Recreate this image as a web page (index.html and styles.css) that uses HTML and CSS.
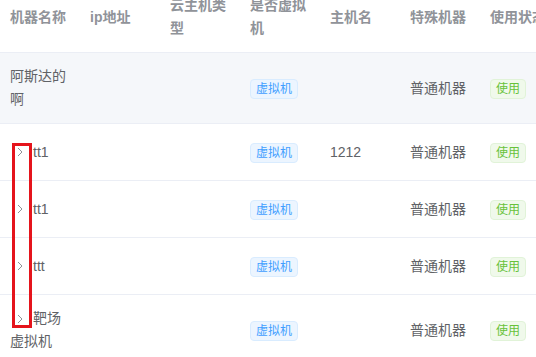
FILE: index.html
```html
<!DOCTYPE html>
<html lang="zh-CN">
<head>
<meta charset="utf-8">
<link rel="stylesheet" href="styles.css">
</head>
<body>
<div class="wrap">
  <table class="tbl">
    <colgroup>
      <col class="c"><col class="c"><col class="c"><col class="c"><col class="c"><col class="c"><col class="c">
    </colgroup>
    <thead>
      <tr>
        <th><div class="cell">机器名称</div></th>
        <th><div class="cell">ip地址</div></th>
        <th><div class="cell">云主机类型</div></th>
        <th><div class="cell">是否虚拟机</div></th>
        <th><div class="cell">主机名</div></th>
        <th><div class="cell">特殊机器</div></th>
        <th><div class="cell">使用状态</div></th>
      </tr>
    </thead>
    <tbody>
      <tr class="hover">
        <td><div class="cell">阿斯达的啊</div></td>
        <td><div class="cell"></div></td>
        <td><div class="cell"></div></td>
        <td><div class="cell"><span class="tag tag-blue">虚拟机</span></div></td>
        <td><div class="cell"></div></td>
        <td><div class="cell">普通机器</div></td>
        <td><div class="cell"><span class="tag tag-green">使用</span></div></td>
      </tr>
      <tr>
        <td><div class="cell"><span class="expand"><svg width="8" height="10" viewBox="0 0 8 10"><path d="M2 1 L6 5 L2 9" fill="none" stroke="#909399" stroke-width="1"/></svg></span>tt1</div></td>
        <td><div class="cell"></div></td>
        <td><div class="cell"></div></td>
        <td><div class="cell"><span class="tag tag-blue">虚拟机</span></div></td>
        <td><div class="cell">1212</div></td>
        <td><div class="cell">普通机器</div></td>
        <td><div class="cell"><span class="tag tag-green">使用</span></div></td>
      </tr>
      <tr>
        <td><div class="cell"><span class="expand"><svg width="8" height="10" viewBox="0 0 8 10"><path d="M2 1 L6 5 L2 9" fill="none" stroke="#909399" stroke-width="1"/></svg></span>tt1</div></td>
        <td><div class="cell"></div></td>
        <td><div class="cell"></div></td>
        <td><div class="cell"><span class="tag tag-blue">虚拟机</span></div></td>
        <td><div class="cell"></div></td>
        <td><div class="cell">普通机器</div></td>
        <td><div class="cell"><span class="tag tag-green">使用</span></div></td>
      </tr>
      <tr>
        <td><div class="cell"><span class="expand"><svg width="8" height="10" viewBox="0 0 8 10"><path d="M2 1 L6 5 L2 9" fill="none" stroke="#909399" stroke-width="1"/></svg></span>ttt</div></td>
        <td><div class="cell"></div></td>
        <td><div class="cell"></div></td>
        <td><div class="cell"><span class="tag tag-blue">虚拟机</span></div></td>
        <td><div class="cell"></div></td>
        <td><div class="cell">普通机器</div></td>
        <td><div class="cell"><span class="tag tag-green">使用</span></div></td>
      </tr>
      <tr>
        <td><div class="cell"><span class="expand"><svg width="8" height="10" viewBox="0 0 8 10"><path d="M2 1 L6 5 L2 9" fill="none" stroke="#909399" stroke-width="1"/></svg></span>靶场虚拟机</div></td>
        <td><div class="cell"></div></td>
        <td><div class="cell"></div></td>
        <td><div class="cell"><span class="tag tag-blue">虚拟机</span></div></td>
        <td><div class="cell"></div></td>
        <td><div class="cell">普通机器</div></td>
        <td><div class="cell"><span class="tag tag-green">使用</span></div></td>
      </tr>
    </tbody>
  </table>
  <div class="annot"></div>
</div>
</body>
</html>
```
FILE: styles.css
```css
html, body {
  margin: 0;
  padding: 0;
  background: #fff;
  overflow: hidden;
  width: 536px;
  height: 357px;
}
.wrap {
  position: relative;
  width: 536px;
  height: 357px;
  overflow: hidden;
}
.tbl {
  margin-top: -18px;
  table-layout: fixed;
  width: 560px;
  border-collapse: collapse;
  border-spacing: 0;
  font-family: "Liberation Sans", "Noto Sans CJK SC", sans-serif;
  font-size: 14px;
  color: #606266;
}
.c { width: 80px; }
.tbl th, .tbl td {
  padding: 12px 0;
  text-align: left;
  vertical-align: middle;
  border-bottom: 1px solid #ebeef5;
}
.tbl td { height: 32px; }
.tbl th {
  color: #909399;
  font-weight: bold;
}
.cell {
  padding: 0 10px;
  line-height: 23px;
  word-break: break-all;
}
.hover td { background: #f5f7fa; }
.expand {
  display: inline-flex;
  align-items: center;
  justify-content: center;
  width: 20px;
  height: 23px;
  margin-right: 3px;
  vertical-align: top;
}
.expand svg {
  display: block;
}
.tag {
  display: inline-block;
  box-sizing: border-box;
  height: 20px;
  line-height: 18px;
  padding: 0 5px;
  font-size: 12px;
  border: 1px solid;
  border-radius: 4px;
  vertical-align: middle;
}
.tag-blue {
  background: #ecf5ff;
  border-color: #d9ecff;
  color: #409eff;
}
.tag-green {
  background: #f0f9eb;
  border-color: #e1f3d8;
  color: #67c23a;
}
.annot {
  position: absolute;
  left: 12px;
  top: 143px;
  width: 20px;
  height: 185px;
  box-sizing: border-box;
  border: 3px solid #e5141c;
}
```
